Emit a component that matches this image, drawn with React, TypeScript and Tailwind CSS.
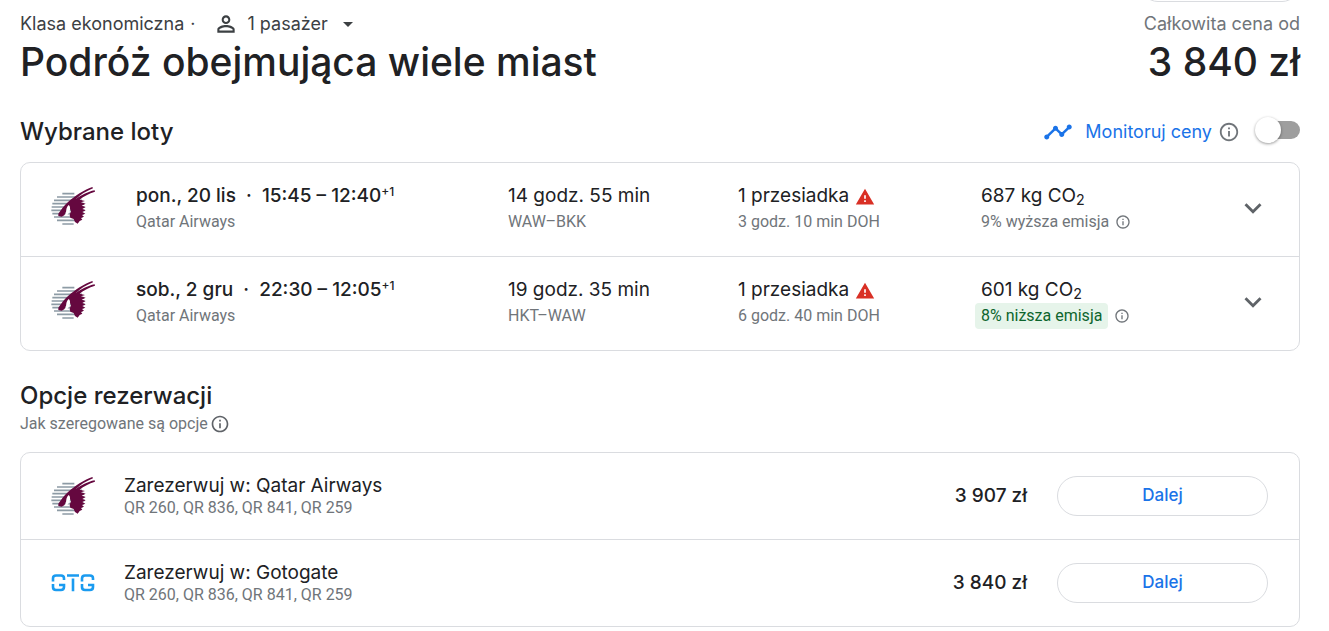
import type { ReactNode } from 'react';

const heading = "font-['Inter','Liberation_Sans',sans-serif]";

function QatarLogo() {
  return (
    <svg viewBox="0 0 132 117" className="h-[39px] w-11" role="img" aria-label="Qatar Airways">
      <g stroke="#8d9ba5" strokeWidth="5">
        <path d="M34 20H70M18 30H84M9 40H93M4 50H98M2 60H100M1 70H101M4 80H98M9 90H94M18 100H84M34 111H68" />
      </g>
      <path
        fill="#65083f"
        d="M22 80C30 68 40 54 52 44C72 27 98 9 124 0L126 4C104 13 86 25 74 36C90 26 110 14 131 10L132 14C114 19 98 28 86 38L102 42L90 46L104 50L92 56L104 60L94 66L104 70L94 75L103 80L93 84L99 89L90 93L94 98L86 102L80 110L72 105L68 96L58 92L56 84L60 72L55 62L47 70L40 85L32 89L22 87Z"
      />
      <path fill="#fff" d="M53 54C58 57 58 66 56 73C53 81 49 86 41 88L46 74C45 67 47 60 53 54Z" />
    </svg>
  );
}

function GotogateLogo() {
  return (
    <svg viewBox="0 0 44 20" className="h-5 w-11" role="img" aria-label="Gotogate" fill="none" stroke="#1a9bf0" strokeWidth="2.6">
      <path d="M13 7V5.500Q13 2.500 10 2.500H5Q2 2.500 2 5.500V8.500M2 11V14Q2 17 5 17H10Q13 17 13 14V12H8" />
      <path d="M16 2.500H28M22 5.500V18.300" />
      <path d="M42 7V5.500Q42 2.500 39 2.500H34Q31 2.500 31 5.500V8.500M31 11V14Q31 17 34 17H39Q42 17 42 14V12H37" />
    </svg>
  );
}

function InfoIcon({ className }: { className: string }) {
  return (
    <svg viewBox="0 0 24 24" className={className} fill="currentColor" aria-hidden="true">
      <path d="M11 7h2v2h-2zm0 4h2v6h-2zm1-9C6.480 2 2 6.480 2 12s4.480 10 10 10 10-4.480 10-10S17.520 2 12 2zm0 18c-4.410 0-8-3.590-8-8s3.590-8 8-8 8 3.590 8 8-3.590 8-8 8z" />
    </svg>
  );
}

function WarningIcon() {
  return (
    <svg viewBox="0 0 24 24" className="mt-0.5 h-5 w-5 text-[#d93025]" fill="currentColor" aria-hidden="true">
      <path d="M1 21h22L12 2 1 21zm12-3h-2v-2h2v2zm0-4h-2v-4h2v4z" />
    </svg>
  );
}

const flights = [
  { date: 'pon., 20 lis', time: '15:45 – 12:40', duration: '14 godz. 55 min', route: 'WAW–BKK', layover: '3 godz. 10 min DOH', co2: '687', emission: '9% wyższa emisja', low: false },
  { date: 'sob., 2 gru', time: '22:30 – 12:05', duration: '19 godz. 35 min', route: 'HKT–WAW', layover: '6 godz. 40 min DOH', co2: '601', emission: '8% niższa emisja', low: true },
];

const offers = [
  { name: 'Qatar Airways', price: '3 907 zł', logo: <QatarLogo /> },
  { name: 'Gotogate', price: '3 840 zł', logo: <GotogateLogo /> },
];

function Cell({ title, children }: { title: ReactNode; children: ReactNode }) {
  return (
    <div className="whitespace-nowrap">
      <div className={`${heading} flex h-7 items-center text-[19px]`}>{title}</div>
      <div className="flex h-6 items-center text-base text-[#70757a]">{children}</div>
    </div>
  );
}

export default function App() {
  return (
    <main className="bg-white pr-[29px] pl-5 font-['Roboto','Liberation_Sans',sans-serif] text-[#202124]">
      <div className="flex h-0.5 items-end justify-end overflow-hidden" aria-hidden="true">
        <div className="h-9 w-40 shrink-0 rounded-full border border-[#dadce0]" />
      </div>

      <header className={`${heading} flex justify-between pt-2`}>
        <div>
          <div className="flex h-7 items-center text-lg text-[#3c4043]">
            <span>Klasa ekonomiczna</span>
            <span className="ml-1.5">·</span>
            <svg viewBox="0 0 24 24" className="mr-2 ml-[18px] h-[26px] w-[26px]" fill="currentColor" aria-hidden="true">
              <path d="M12 5.900c1.160 0 2.100.94 2.100 2.100s-.94 2.100-2.100 2.100S9.900 9.160 9.900 8s.94-2.100 2.100-2.100m0 9c2.970 0 6.100 1.460 6.100 2.100v1.100H5.900V17c0-.64 3.130-2.100 6.100-2.100M12 4C9.790 4 8 5.790 8 8s1.790 4 4 4 4-1.790 4-4-1.790-4-4-4zm0 9c-2.670 0-8 1.340-8 4v3h16v-3c0-2.660-5.330-4-8-4z" />
            </svg>
            <select aria-label="Liczba pasażerów" className="appearance-none bg-transparent">
              <option>1 pasażer</option>
            </select>
            <svg viewBox="0 0 24 24" className="ml-2 h-6 w-6" fill="currentColor" aria-hidden="true">
              <path d="M7 10l5 5 5-5z" />
            </svg>
          </div>
          <h1 className="text-[39px] leading-12 font-medium">Podróż obejmująca wiele miast</h1>
        </div>
        <div className="text-right">
          <div className="flex h-7 items-center justify-end text-lg text-[#70757a]">Całkowita cena od</div>
          <div className="text-[39px] leading-12 font-medium">3 840 zł</div>
        </div>
      </header>

      <section>
        <div className={`${heading} mt-[26px] flex h-10 items-center justify-between`}>
          <h2 className="text-2xl font-medium">Wybrane loty</h2>
          <div className="flex items-center">
            <svg viewBox="0 0 24 24" className="mr-3 h-[30px] w-[30px] text-[#1a73e8]" fill="currentColor" aria-hidden="true">
              <path d="M23 8c0 1.100-.9 2-2 2-.18 0-.35-.02-.51-.07l-3.560 3.550c.05.16.07.34.07.52 0 1.100-.9 2-2 2s-2-.9-2-2c0-.18.02-.36.07-.52l-2.550-2.550c-.16.05-.34.07-.52.07s-.36-.02-.52-.07l-4.550 4.560c.05.16.07.33.07.51 0 1.100-.9 2-2 2s-2-.9-2-2 .9-2 2-2c.18 0 .35.02.51.07l4.560-4.550C8.020 9.360 8 9.180 8 9c0-1.100.9-2 2-2s2 .9 2 2c0 .18-.02.36-.07.52l2.550 2.550c.16-.05.34-.07.52-.07s.36.02.52.07l3.550-3.560C19.020 8.350 19 8.180 19 8c0-1.100.9-2 2-2s2 .9 2 2z" />
            </svg>
            <label htmlFor="track" className="text-lg text-[#1a73e8]">Monitoruj ceny</label>
            <InfoIcon className="mr-[15px] ml-1.5 h-[22px] w-[22px] text-[#70757a]" />
            <input
              id="track"
              type="checkbox"
              role="switch"
              className="mb-1 flex h-[26px] w-[45px] appearance-none items-center before:-mr-[18px] before:z-10 before:h-[26px] before:w-[26px] before:shrink-0 before:rounded-full before:bg-white before:shadow-[0_1px_3px_rgba(0,0,0,0.4)] after:h-[18px] after:w-[37px] after:shrink-0 after:rounded-full after:bg-[#9e9e9e]"
            />
          </div>
        </div>

        <ul className="mt-2.5 divide-y divide-[#dadce0] rounded-[10px] border border-[#dadce0]">
          {flights.map((f) => (
            <li key={f.date} className="grid grid-cols-[85px_372fr_230fr_243fr_260fr_24px] pt-[19px] pr-[34px] pb-[22px] pl-[30px]">
              <div className="pt-[5px]"><QatarLogo /></div>
              <Cell
                title={
                  <span className="font-medium">
                    {f.date}&nbsp; · &nbsp;{f.time}
                    <sup className="text-xs">+1</sup>
                  </span>
                }
              >
                Qatar Airways
              </Cell>
              <Cell title={f.duration}>{f.route}</Cell>
              <Cell title={<><span className="mr-1.5">1 przesiadka</span><WarningIcon /></>}>{f.layover}</Cell>
              <Cell title={<span>{f.co2} kg CO<sub>2</sub></span>}>
                <span className={f.low ? '-ml-1.5 flex h-[26px] items-center rounded bg-[#e6f4ea] px-1.5 text-[#0d652d]' : ''}>{f.emission}</span>
                <InfoIcon className="ml-1.5 h-4 w-4" />
              </Cell>
              <button type="button" aria-label="Rozwiń" className="flex items-center justify-center text-[#5f6368]">
                <svg viewBox="0 0 24 24" className="h-[34px] w-[34px] shrink-0" fill="currentColor" aria-hidden="true">
                  <path d="M16.590 8.590L12 13.170 7.410 8.590 6 10l6 6 6-6z" />
                </svg>
              </button>
            </li>
          ))}
        </ul>
      </section>

      <section>
        <h2 className={`${heading} mt-7 text-2xl leading-[34px] font-medium`}>Opcje rezerwacji</h2>
        <div className="flex h-[22px] items-center text-base text-[#70757a]">
          Jak szeregowane są opcje
          <InfoIcon className="ml-0.5 h-5 w-5 text-[#5f6368]" />
        </div>
        <ul className="mt-[17px] divide-y divide-[#dadce0] rounded-[10px] border border-[#dadce0]">
          {offers.map((o) => (
            <li key={o.name} className="box-content flex h-[86px] items-center">
              <div className="w-[103px] pl-[30px]">{o.logo}</div>
              <div className="flex-1">
                <div className={`${heading} text-[19px] leading-6`}>Zarezerwuj w: {o.name}</div>
                <div className="text-base leading-5 text-[#70757a]">QR 260, QR 836, QR 841, QR 259</div>
              </div>
              <div className={`${heading} mr-[30px] text-[19px] font-medium`}>{o.price}</div>
              <button type="button" className={`${heading} mr-[31px] h-10 w-[211px] rounded-full border border-[#dadce0] text-[17px] font-medium text-[#1a73e8]`}>
                Dalej
              </button>
            </li>
          ))}
        </ul>
      </section>
    </main>
  );
}
